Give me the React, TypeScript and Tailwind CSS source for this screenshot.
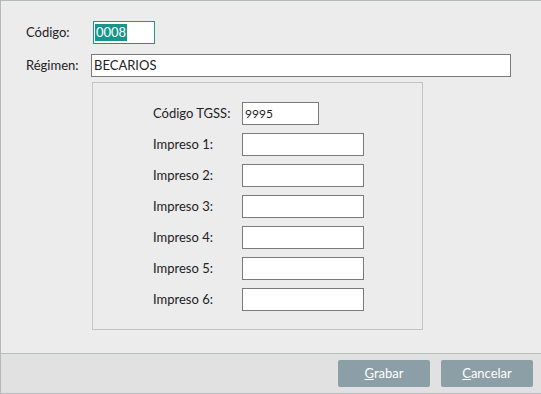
export default function App() {
  const impresos = ["Impreso 1:", "Impreso 2:", "Impreso 3:", "Impreso 4:", "Impreso 5:", "Impreso 6:"];

  return (
    <div
      className="flex h-[394px] w-[541px] flex-col border-t border-l border-[#b4b9bc] bg-[#ececec] text-[13px] text-[#222]"
      style={{ fontFamily: "Lato, 'Open Sans', sans-serif" }}
    >
      <div className="flex-1 pt-[20px] pl-[25px]">
        <div className="flex items-center">
          <span className="w-[67px]">Código:</span>
          <div className="flex h-[23px] w-[62px] items-center border border-[#1b968c] bg-white px-[1px]">
            <span className="bg-[#17958b] px-[1px] text-[13px] leading-[17px] text-white">0008</span>
          </div>
        </div>

        <div className="mt-[10px] flex items-center">
          <span className="w-[65px]">Régimen:</span>
          <div className="flex h-[23px] w-[420px] items-center border border-[#7a7a7a] bg-white px-[2px] text-[13px]">
            BECARIOS
          </div>
        </div>

        <div className="mt-[5px] ml-[66px] h-[248px] w-[331px] border border-[#c3c3c3] pt-[19px] pl-[60px]">
          <div className="flex items-center">
            <span className="w-[89px]">Código TGSS:</span>
            <div className="flex h-[23px] w-[77px] items-center border border-[#7a7a7a] bg-white px-[2px] text-[12px]">
              9995
            </div>
          </div>
          {impresos.map((label) => (
            <div key={label} className="mt-[8px] flex items-center">
              <span className="w-[89px]">{label}</span>
              <div className="h-[23px] w-[122px] border border-[#7a7a7a] bg-white" />
            </div>
          ))}
        </div>
      </div>

      <div className="flex h-[41px] items-center justify-end gap-[11px] border-t border-b border-[#b9bec1] bg-[#e1e1e1] pr-[8px]">
        <button className="h-[27px] w-[92px] rounded-[2px] bg-[#8c9ea6] text-[13px] text-white">
          <span className="underline">G</span>rabar
        </button>
        <button className="h-[27px] w-[92px] rounded-[2px] bg-[#8c9ea6] text-[13px] text-white">
          <span className="underline">C</span>ancelar
        </button>
      </div>
    </div>
  );
}
